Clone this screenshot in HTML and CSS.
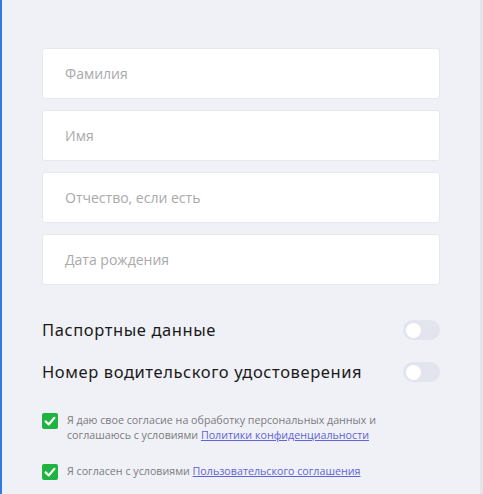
FILE: index.html
```html
<!DOCTYPE html>
<html lang="ru">
<head>
<meta charset="utf-8">
<link rel="stylesheet" href="styles.css">
</head>
<body>
<div class="page">
  <form class="form">
    <div class="fields">
      <div class="field">Фамилия</div>
      <div class="field">Имя</div>
      <div class="field">Отчество, если есть</div>
      <div class="field">Дата рождения</div>
    </div>
    <div class="toggles">
      <div class="toggle-row">
        <span class="toggle-label">Паспортные данные</span>
        <span class="switch"><span class="knob"></span></span>
      </div>
      <div class="toggle-row">
        <span class="toggle-label">Номер водительского удостоверения</span>
        <span class="switch"><span class="knob"></span></span>
      </div>
    </div>
    <div class="checks">
      <div class="check-row">
        <span class="box"><svg viewBox="0 0 16 16" width="16" height="16"><path d="M3.6 8.4 L6.8 11.4 L12.4 4.8" fill="none" stroke="#fff" stroke-width="2.2" stroke-linecap="round" stroke-linejoin="round"/></svg></span>
        <p class="check-text"><span>Я даю свое согласие на обработку персональных данных и</span><br><span>соглашаюсь с условиями</span> <a href="#" class="link">Политики конфиденциальности</a></p>
      </div>
      <div class="check-row">
        <span class="box"><svg viewBox="0 0 16 16" width="16" height="16"><path d="M3.6 8.4 L6.8 11.4 L12.4 4.8" fill="none" stroke="#fff" stroke-width="2.2" stroke-linecap="round" stroke-linejoin="round"/></svg></span>
        <p class="check-text">Я согласен с условиями <a href="#" class="link">Пользовательского соглашения</a></p>
      </div>
    </div>
  </form>
</div>
</body>
</html>
```
FILE: styles.css
```css
html, body {
  margin: 0;
  padding: 0;
  height: 100%;
}
body {
  background: #f0f1f6;
  font-family: "Open Sans", "Noto Sans", sans-serif;
}
.page {
  min-height: 100%;
  box-sizing: border-box;
  border-left: 2px solid #2f7be6;
  border-right: 3px solid #e4e5ea;
  padding: 48px 40px 0 40px;
}
.form {
  display: flex;
  flex-direction: column;
}
.fields {
  display: flex;
  flex-direction: column;
  gap: 11px;
}
.field {
  height: 51px;
  box-sizing: border-box;
  background: #fff;
  border: 1px solid #e6e8ee;
  border-radius: 3px;
  padding-left: 22px;
  display: flex;
  align-items: center;
  font-size: 14px;
  color: #a9a9ab;
}
.toggles {
  margin-top: 34px;
  display: flex;
  flex-direction: column;
  gap: 20px;
}
.toggle-row {
  display: flex;
  align-items: center;
  justify-content: space-between;
  height: 22px;
}
.toggle-label {
  font-family: "Noto Sans", sans-serif;
  font-size: 16.5px;
  line-height: 22px;
  color: #1a1a1a;
  letter-spacing: 0.6px;
}
.switch {
  width: 37px;
  height: 20px;
  border-radius: 10px;
  background: #e3e5ee;
  display: flex;
  align-items: center;
  padding-left: 3px;
  box-sizing: border-box;
}
.knob {
  width: 15px;
  height: 15px;
  border-radius: 50%;
  background: #fff;
}
.checks {
  margin-top: 30px;
  display: flex;
  flex-direction: column;
  gap: 21px;
}
.check-row {
  display: flex;
  align-items: flex-start;
  gap: 9px;
}
.box {
  flex: none;
  width: 16px;
  height: 16px;
  border-radius: 2px;
  background: #1fb33f;
  display: flex;
}
.check-text {
  margin: 0;
  font-size: 10.7px;
  line-height: 15px;
  color: #7b7b7e;
  padding-top: 0;
}
.link {
  color: #5f63d9;
  text-decoration: underline;
}
```
